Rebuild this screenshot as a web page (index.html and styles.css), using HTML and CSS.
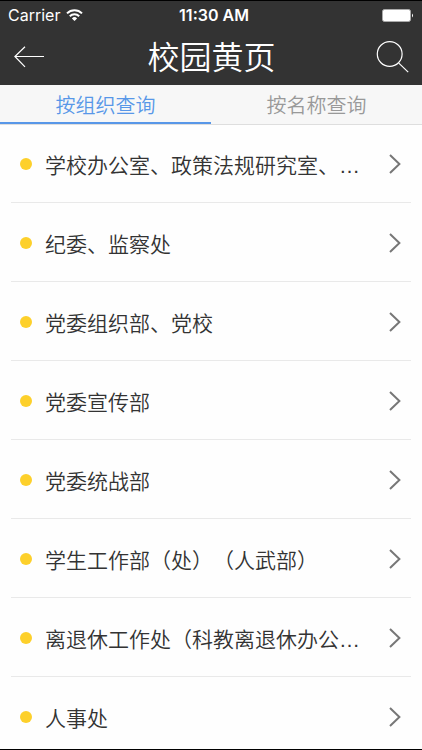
FILE: index.html
```html
<!DOCTYPE html>
<html lang="zh-CN">
<head>
<meta charset="utf-8">
<meta name="viewport" content="width=device-width, initial-scale=1">
<title>校园黄页</title>
<link rel="stylesheet" href="styles.css">
</head>
<body>
<div class="app">
  <header class="header">
    <div class="status">
      <div class="carrier"><span>Carrier</span>
        <svg width="17" height="12" viewBox="0 0 17 12" fill="none" stroke="#fff" stroke-width="2" aria-hidden="true"><path d="M1 4.4a10.6 10.6 0 0 1 15 0M3.8 7.3a6.6 6.6 0 0 1 9.4 0"/><path d="M8.5 12 5.9 9.4a3.7 3.7 0 0 1 5.2 0z" fill="#fff" stroke="none"/></svg>
      </div>
      <span class="time">11:30 AM</span>
      <svg class="battery" width="32" height="13" viewBox="0 0 32 13" aria-hidden="true"><rect x=".5" y=".5" width="28" height="12" rx="2" fill="#fff" stroke="#aaa"/><path d="M30 4.5q2 2 0 4z" fill="#fff"/></svg>
    </div>
    <div class="titlebar">
      <button class="icon-button" aria-label="返回"><svg width="30" height="22" viewBox="0 0 30 22" fill="none" stroke="#fff" stroke-width="1.2"><path d="M30 10.5H1M11 .7.9 10.5 11 20.8"/></svg></button>
      <h1>校园黄页</h1>
      <button class="icon-button" aria-label="搜索"><svg width="33" height="33" viewBox="0 0 33 33" fill="none" stroke="#fff" stroke-width="1.2"><circle cx="13.7" cy="13" r="12.4"/><path d="m22.8 22.1 9.4 9"/></svg></button>
    </div>
  </header>
  <nav class="tabs">
    <button class="tab active">按组织查询</button>
    <button class="tab">按名称查询</button>
  </nav>
  <ul class="list">
    <li><a class="row" href="#"><span class="name">学校办公室、政策法规研究室、…</span><svg class="chevron" viewBox="0 0 12 20"><path d="m1 1 9.4 9L1 19"/></svg></a></li>
    <li><a class="row" href="#"><span class="name">纪委、监察处</span><svg class="chevron" viewBox="0 0 12 20"><path d="m1 1 9.4 9L1 19"/></svg></a></li>
    <li><a class="row" href="#"><span class="name">党委组织部、党校</span><svg class="chevron" viewBox="0 0 12 20"><path d="m1 1 9.4 9L1 19"/></svg></a></li>
    <li><a class="row" href="#"><span class="name">党委宣传部</span><svg class="chevron" viewBox="0 0 12 20"><path d="m1 1 9.4 9L1 19"/></svg></a></li>
    <li><a class="row" href="#"><span class="name">党委统战部</span><svg class="chevron" viewBox="0 0 12 20"><path d="m1 1 9.4 9L1 19"/></svg></a></li>
    <li><a class="row" href="#"><span class="name">学生工作部（处）（人武部）</span><svg class="chevron" viewBox="0 0 12 20"><path d="m1 1 9.4 9L1 19"/></svg></a></li>
    <li><a class="row" href="#"><span class="name">离退休工作处（科教离退休办公…</span><svg class="chevron" viewBox="0 0 12 20"><path d="m1 1 9.4 9L1 19"/></svg></a></li>
    <li><a class="row" href="#"><span class="name">人事处</span><svg class="chevron" viewBox="0 0 12 20"><path d="m1 1 9.4 9L1 19"/></svg></a></li>
  </ul>
</div>
</body>
</html>
```
FILE: styles.css
```css
* { box-sizing: border-box; }
body {
  margin: 0;
  background: #fefefe;
  font-family: "Noto Sans CJK SC", sans-serif;
  font-weight: 350;
  text-spacing-trim: space-all;
}
button {
  border: 0;
  padding: 0;
  background: none;
  font: inherit;
}
svg { display: block; }
.app {
  display: flex;
  flex-direction: column;
  height: 100vh;
  overflow: hidden;
  border-top: 1px solid #000;
  border-bottom: 1px solid #000;
}
.header {
  flex: none;
  background: #333;
  color: #fff;
}
.status {
  display: grid;
  grid-template-columns: 1fr auto 1fr;
  align-items: center;
  height: 28px;
  padding: 0 8px;
  font-family: Inter, sans-serif;
  font-size: 16px;
  font-weight: 400;
}
.carrier {
  display: flex;
  align-items: center;
  gap: 6px;
}
.time {
  padding-left: 6px;
  font-weight: 600;
}
.battery { justify-self: end; }
.titlebar {
  display: flex;
  align-items: center;
  justify-content: space-between;
  height: 56px;
  padding: 0 13px 0 14px;
}
.icon-button {
  display: flex;
  align-items: center;
  width: 33px;
  height: 44px;
}
h1 {
  margin: 0;
  padding-bottom: 4px;
  font-size: 32px;
  line-height: 52px;
  font-weight: 350;
}
.tabs {
  display: flex;
  flex: none;
  height: 39px;
  background: #f7f7f7;
  box-shadow: 0 1px #dedede;
}
.tab {
  flex: 1;
  padding-top: 2px;
  border-bottom: 2px solid transparent;
  color: #999;
  font-size: 20px;
  line-height: 35px;
}
.tab.active {
  border-color: #5897e8;
  color: #5897e8;
}
.list {
  flex: 1;
  min-height: 0;
  margin: 0;
  padding: 0 11px;
  overflow: hidden;
  list-style: none;
}
.row {
  display: flex;
  align-items: center;
  height: 79px;
  padding: 2px 10px 0 9px;
  border-bottom: 1px solid #e9e9e9;
  color: #333;
  font-family: "Liberation Sans", "Noto Sans CJK SC", sans-serif;
  font-size: 21px;
  text-decoration: none;
}
.row::before {
  content: "";
  flex: none;
  width: 12px;
  height: 12px;
  margin-right: 13px;
  border-radius: 50%;
  background: #fdd02b;
}
.name {
  flex: 1;
  min-width: 0;
  overflow: hidden;
  text-overflow: ellipsis;
  white-space: nowrap;
}
.chevron {
  flex: none;
  width: 12px;
  height: 20px;
  margin-left: 19px;
  fill: none;
  stroke: #777;
  stroke-width: 2;
}
```
